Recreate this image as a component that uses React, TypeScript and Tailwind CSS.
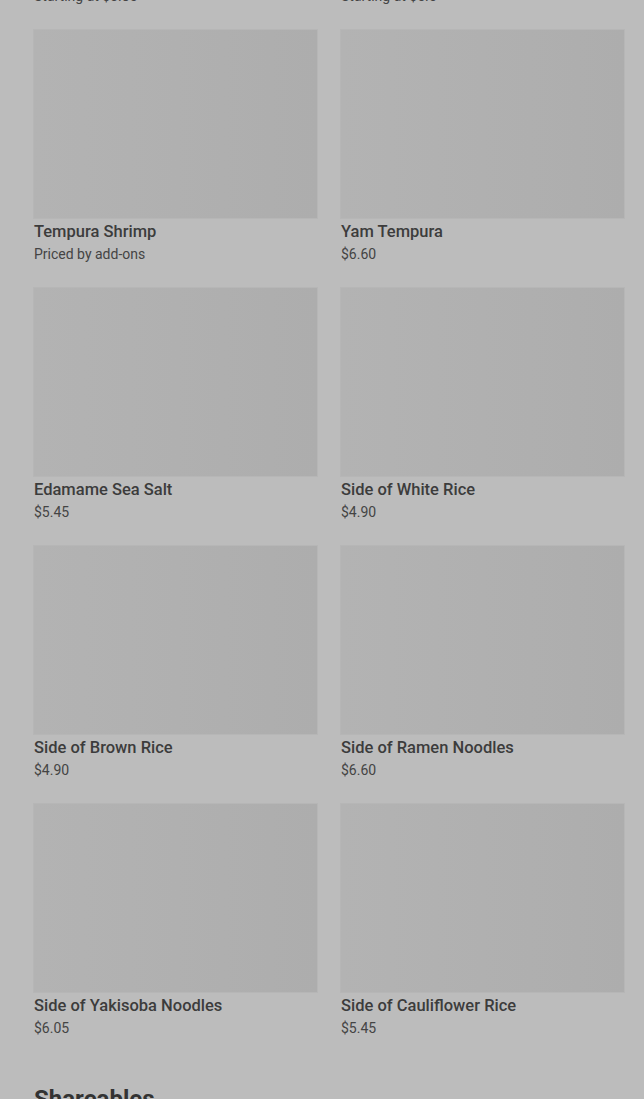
import React from 'react';

type Item = { name: string; price: string };

const items: Item[] = [
  { name: 'Miso Soup', price: 'Starting at $3.85' },
  { name: 'Seaweed Salad', price: 'Starting at $5.5' },
  { name: 'Tempura Shrimp', price: 'Priced by add-ons' },
  { name: 'Yam Tempura', price: '$6.60' },
  { name: 'Edamame Sea Salt', price: '$5.45' },
  { name: 'Side of White Rice', price: '$4.90' },
  { name: 'Side of Brown Rice', price: '$4.90' },
  { name: 'Side of Ramen Noodles', price: '$6.60' },
  { name: 'Side of Yakisoba Noodles', price: '$6.05' },
  { name: 'Side of Cauliflower Rice', price: '$5.45' },
];

function MenuCard({ item }: { item: Item }) {
  return (
    <div className="flex flex-col">
      <div className="h-[188px] w-full bg-gradient-to-r from-[#b3b3b3] to-[#adadad] shadow-[0_0_0_1px_#b6b6b6]" />
      <div className="mt-[2px] text-[16.5px] leading-[24px] font-medium text-[#3c3c3c]">{item.name}</div>
      <div className="text-[14px] leading-[21px] text-[#444]">{item.price}</div>
    </div>
  );
}

export default function App() {
  return (
    <div
      className="h-[1099px] overflow-hidden bg-[#bcbcbc] pl-[34px] pr-[20px]"
      style={{ fontFamily: 'Roboto, "Noto Sans", sans-serif' }}
    >
      <div className="mt-[-228px] grid grid-cols-2 gap-x-[24px] gap-y-[23px]">
        {items.map((item) => (
          <MenuCard key={item.name} item={item} />
        ))}
      </div>
      <h2 className="mt-[46px] text-[24px] leading-[28px] font-bold text-[#333]">Shareables</h2>
    </div>
  );
}
